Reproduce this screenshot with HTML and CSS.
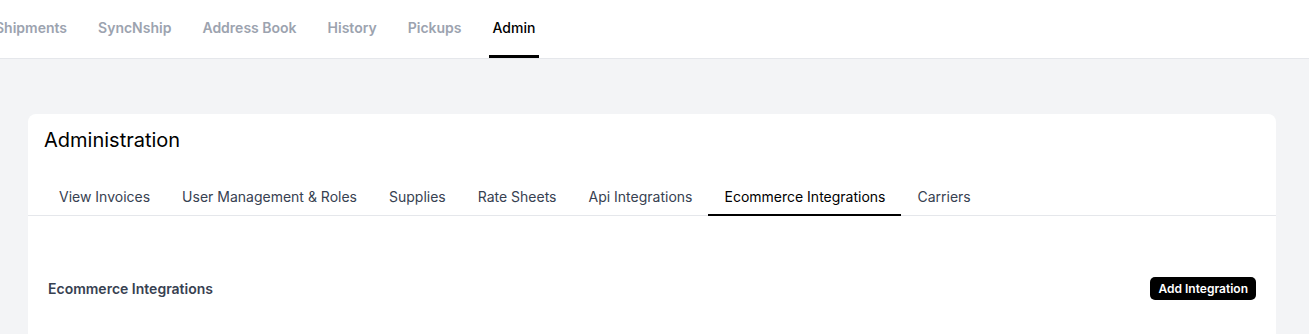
FILE: index.html
```html
<!DOCTYPE html>
<html lang="en">
<head>
    <meta charset="UTF-8">
    <meta name="viewport" content="width=device-width, initial-scale=1.0">
    <title>Administration</title>
    <link rel="stylesheet" href="styles.css">
</head>
<body>
    <!-- Top navigation -->
    <nav class="topnav">
        <a class="nav-item" href="#">Shipments</a>
        <a class="nav-item" href="#">SyncNship</a>
        <a class="nav-item" href="#">Address Book</a>
        <a class="nav-item" href="#">History</a>
        <a class="nav-item" href="#">Pickups</a>
        <a class="nav-item active" href="#">Admin</a>
    </nav>

    <main class="page">
        <div class="card">
            <h1 class="card-title">Administration</h1>

            <div class="tabs">
                <a class="tab" href="#">View Invoices</a>
                <a class="tab" href="#">User Management &amp; Roles</a>
                <a class="tab" href="#">Supplies</a>
                <a class="tab" href="#">Rate Sheets</a>
                <a class="tab" href="#">Api Integrations</a>
                <a class="tab active" href="#">Ecommerce Integrations</a>
                <a class="tab" href="#">Carriers</a>
            </div>

            <div class="tab-content">
                <div class="section-head">
                    <h2>Ecommerce Integrations</h2>
                    <button type="button" class="btn-dark">Add Integration</button>
                </div>
            </div>
        </div>
    </main>
</body>
</html>
```

FILE: styles.css
```css
* {
    box-sizing: border-box;
}

html, body {
    margin: 0;
    padding: 0;
}

body {
    font-family: Inter, "Noto Sans", Arial, sans-serif;
    background: #f3f4f6;
    color: #111;
    overflow: hidden;
}

a {
    text-decoration: none;
}

/* Top navigation */
.topnav {
    display: flex;
    gap: 23px;
    height: 59px;
    background: #fff;
    border-bottom: 1px solid #e5e7eb;
    margin-left: -9px;
    white-space: nowrap;
}

.nav-item {
    display: flex;
    align-items: center;
    padding: 0 4px;
    font-size: 14px;
    font-weight: 600;
    color: #9ca3af;
    border-bottom: 3px solid transparent;
    height: 58px;
}

.nav-item.active {
    color: #000;
    font-weight: 500;
    border-bottom-color: #000;
}

/* Page */
.page {
    padding: 55px 33px 0 28px;
}

.card {
    background: #fff;
    border-radius: 8px;
    min-height: 260px;
}

.card-title {
    margin: 0;
    padding: 12px 16px 0;
    font-size: 20px;
    line-height: 28px;
    font-weight: 400;
    color: #000;
}

.tabs {
    display: flex;
    margin-top: 23px;
    padding-left: 15px;
    border-bottom: 1px solid #e5e7eb;
}

.tab {
    padding: 10px 16px 7px;
    font-size: 14px;
    line-height: 20px;
    color: #374151;
    border-bottom: 2px solid transparent;
    margin-bottom: -1px;
}

.tab.active {
    color: #000;
    border-bottom-color: #000;
}

.tab-content {
    padding: 61px 20px 0;
}

.section-head {
    display: flex;
    align-items: center;
    justify-content: space-between;
}

.section-head h2 {
    margin: 0;
    font-size: 14px;
    font-weight: 600;
    color: #374151;
}

.btn-dark {
    height: 23px;
    padding: 0 8px;
    font-family: inherit;
    font-size: 12px;
    font-weight: 600;
    background: #000;
    color: #fff;
    border: none;
    border-radius: 5px;
    cursor: pointer;
}
```
